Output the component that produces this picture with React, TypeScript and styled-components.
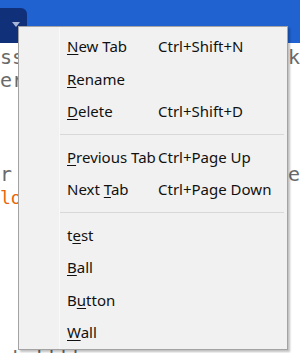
import React from 'react';
import styled, { createGlobalStyle } from 'styled-components';

const GlobalStyle = createGlobalStyle`
  html, body {
    margin: 0;
    padding: 0;
    width: 300px;
    height: 353px;
    overflow: hidden;
    background: #ffffff;
  }
`;

const Page = styled.div`
  position: relative;
  width: 300px;
  height: 353px;
  overflow: hidden;
  display: flex;
  flex-direction: column;
`;

const TopBar = styled.div`
  height: 43px;
  flex-shrink: 0;
  background: #1f62d0;
  display: flex;
  align-items: flex-end;
`;

const ActiveTab = styled.div`
  width: 27px;
  height: 35px;
  background: #10307a;
  border-top-right-radius: 6px;
  display: flex;
  justify-content: center;
  padding-top: 14px;
  box-sizing: border-box;
`;

const Arrow = styled.div`
  width: 0;
  height: 0;
  margin-left: 5px;
  border-left: 4px solid transparent;
  border-right: 4px solid transparent;
  border-top: 5px solid #a9b6d6;
`;

const Editor = styled.div`
  flex: 1;
  padding-top: 3px;
  display: flex;
  flex-direction: column;
  font-family: "DejaVu Sans Mono", "Liberation Mono", monospace;
  font-size: 20px;
  color: #6a6a6a;
`;

const Line = styled.div<{ $gap?: number; $orange?: boolean }>`
  height: 23px;
  line-height: 23px;
  margin-top: ${({ $gap }) => $gap || 0}px;
  display: flex;
  justify-content: space-between;
  white-space: pre;
  color: ${({ $orange }) => ($orange ? '#e8650c' : '#6a6a6a')};
  font-size: ${({ $orange }) => ($orange ? '18px' : '20px')};
`;

const Menu = styled.div`
  position: absolute;
  left: 18px;
  top: 26px;
  width: 268px;
  padding: 3px 0 0;
  background: #f1f1f1;
  border: 1px solid #a3a3a3;
  box-shadow: 2px 2px 2px rgba(0, 0, 0, 0.25);
  font-family: "Noto Sans", "Open Sans", sans-serif;
  font-size: 15px;
  color: #111;
`;

const Item = styled.div`
  height: 32.5px;
  display: grid;
  grid-template-columns: 91px 1fr;
  align-items: center;
  padding-left: 48px;
  white-space: nowrap;
`;

const Separator = styled.div`
  height: 1px;
  margin: 6px 3px 6px 41px;
  background: #d8d8d8;
`;

const Gutter = styled.div`
  position: absolute;
  left: 40px;
  top: 0;
  bottom: 0;
  width: 1px;
  background: #f8f8f8;
`;

const Key = styled.span`
  text-decoration: underline;
  text-underline-offset: 2px;
`;

type Entry = { pre: string; key: string; post: string; shortcut?: string } | 'sep';

const entries: Entry[] = [
  { pre: '', key: 'N', post: 'ew Tab', shortcut: 'Ctrl+Shift+N' },
  { pre: '', key: 'R', post: 'ename' },
  { pre: '', key: 'D', post: 'elete', shortcut: 'Ctrl+Shift+D' },
  'sep',
  { pre: '', key: 'P', post: 'revious Tab', shortcut: 'Ctrl+Page Up' },
  { pre: 'Next ', key: 'T', post: 'ab', shortcut: 'Ctrl+Page Down' },
  'sep',
  { pre: 't', key: 'e', post: 'st' },
  { pre: '', key: 'B', post: 'all' },
  { pre: 'B', key: 'u', post: 'tton' },
  { pre: '', key: 'W', post: 'all' },
];

export default function App() {
  return (
    <Page>
      <GlobalStyle />
      <TopBar>
        <ActiveTab>
          <Arrow />
        </ActiveTab>
      </TopBar>
      <Editor>
        <Line><span>ss</span><span>k</span></Line>
        <Line><span>er</span><span></span></Line>
        <Line />
        <Line />
        <Line />
        <Line $gap={2}><span>r</span><span>e</span></Line>
        <Line $orange><span>lo</span><span></span></Line>
        <Line $gap={138}><span> kukkkk</span><span></span></Line>
      </Editor>
      <Menu>
        <Gutter />
        {entries.map((e, i) =>
          e === 'sep' ? (
            <Separator key={i} />
          ) : (
            <Item key={i}>
              <span>
                {e.pre}
                <Key>{e.key}</Key>
                {e.post}
              </span>
              <span>{e.shortcut || ''}</span>
            </Item>
          )
        )}
      </Menu>
    </Page>
  );
}
